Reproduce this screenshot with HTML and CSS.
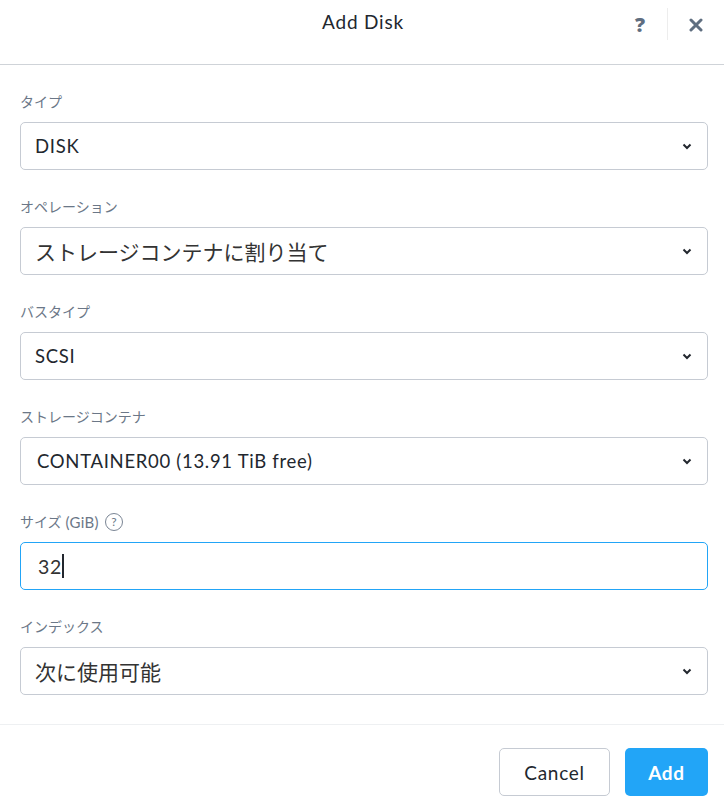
FILE: index.html
```html
<!DOCTYPE html>
<html lang="ja">
<head>
<meta charset="utf-8">
<title>Add Disk</title>
<link rel="stylesheet" href="styles.css">
</head>
<body>
<div class="modal">
  <header class="header">
    <div class="title">Add Disk</div>
    <div class="actions">
      <span class="help">?</span>
      <span class="sep"></span>
      <span class="close">
        <svg width="14" height="14" viewBox="0 0 14 14"><path d="M2 2 L12 12 M12 2 L2 12" stroke="#5f6e80" stroke-width="3" stroke-linecap="round"/></svg>
      </span>
    </div>
  </header>
  <main class="body">
    <div class="field">
      <div class="label">タイプ</div>
      <div class="select"><span class="value">DISK</span><svg class="chev" width="10" height="7" viewBox="0 0 10 7"><path d="M1.5 1.5 L5 5 L8.5 1.5" fill="none" stroke="#22272e" stroke-width="2"/></svg></div>
    </div>
    <div class="field">
      <div class="label">オペレーション</div>
      <div class="select"><span class="value jp">ストレージコンテナに割り当て</span><svg class="chev" width="10" height="7" viewBox="0 0 10 7"><path d="M1.5 1.5 L5 5 L8.5 1.5" fill="none" stroke="#22272e" stroke-width="2"/></svg></div>
    </div>
    <div class="field">
      <div class="label">バスタイプ</div>
      <div class="select"><span class="value">SCSI</span><svg class="chev" width="10" height="7" viewBox="0 0 10 7"><path d="M1.5 1.5 L5 5 L8.5 1.5" fill="none" stroke="#22272e" stroke-width="2"/></svg></div>
    </div>
    <div class="field">
      <div class="label">ストレージコンテナ</div>
      <div class="select"><span class="value wide">CONTAINER00 (13.91 TiB free)</span><svg class="chev" width="10" height="7" viewBox="0 0 10 7"><path d="M1.5 1.5 L5 5 L8.5 1.5" fill="none" stroke="#22272e" stroke-width="2"/></svg></div>
    </div>
    <div class="field">
      <div class="label"><span>サイズ</span><span class="latin">(GiB)</span><span class="qcircle">?</span></div>
      <div class="select input"><span class="value num">32</span><span class="caret"></span></div>
    </div>
    <div class="field">
      <div class="label">インデックス</div>
      <div class="select"><span class="value jp">次に使用可能</span><svg class="chev" width="10" height="7" viewBox="0 0 10 7"><path d="M1.5 1.5 L5 5 L8.5 1.5" fill="none" stroke="#22272e" stroke-width="2"/></svg></div>
    </div>
  </main>
  <footer class="footer">
    <button class="btn cancel">Cancel</button>
    <button class="btn add">Add</button>
  </footer>
</div>
</body>
</html>
```

FILE: styles.css
```css
html, body {
  margin: 0;
  padding: 0;
  background: #ffffff;
}
body {
  font-family: "Lato", "Noto Sans CJK JP", sans-serif;
  color: #22272e;
}
.modal {
  width: 724px;
  height: 808px;
  display: flex;
  flex-direction: column;
}
.header {
  height: 64px;
  border-bottom: 1px solid #cfd3d8;
  display: flex;
  align-items: center;
  justify-content: center;
  position: relative;
  box-sizing: content-box;
  flex: 0 0 auto;
}
.title {
  font-size: 19px;
  letter-spacing: 0.8px;
  margin-top: -21px;
  margin-left: 2px;
  color: #22272e;
}
.actions {
  position: absolute;
  right: 0;
  top: 8px;
  height: 32px;
  display: flex;
  align-items: center;
}
.help {
  font-family: "Open Sans", sans-serif;
  font-size: 20px;
  font-weight: 800;
  color: #5f6e80;
  width: 20px;
  text-align: center;
  margin-right: 17px;
}
.sep {
  width: 1px;
  height: 32px;
  background: #ededed;
}
.close {
  width: 56px;
  display: flex;
  justify-content: center;
  align-items: center;
  padding-top: 2px;
}
.body {
  padding: 27px 16px 0 20px;
  height: 660px;
  box-sizing: border-box;
  border-bottom: 1px solid #eef0f2;
  flex: 0 0 auto;
}
.field {
  margin-bottom: 27px;
}
.label {
  height: 20px;
  line-height: 20px;
  font-size: 14px;
  color: #6b7787;
  margin-bottom: 10px;
  display: flex;
  align-items: center;
}
.latin {
  font-size: 15px;
  letter-spacing: 0.3px;
  margin-left: 4px;
}
.qcircle {
  display: inline-flex;
  border: 1px solid #7a8594;
  border-radius: 50%;
  font-size: 12px;
  line-height: 16px;
  align-items: center;
  justify-content: center;
  box-sizing: border-box;
  width: 18px;
  height: 18px;
  margin-left: 6px;
}
.select {
  height: 48px;
  box-sizing: border-box;
  border: 1px solid #c6cbd3;
  border-radius: 5px;
  display: flex;
  align-items: center;
  padding: 0 14px 0 14px;
}
.value {
  flex: 1;
  font-size: 18.5px;
  letter-spacing: 0.7px;
  color: #22272e;
}
.value.jp {
  font-size: 21px;
  letter-spacing: 0;
  color: #333333;
}
.value.wide {
  padding-left: 2px;
}
.chev {
  display: block;
  margin-right: 1px;
}
.input {
  border-color: #22a5f7;
  padding-left: 17px;
}
.input .value {
  flex: 0 0 auto;
  font-size: 19.5px;
  color: #333;
}
.caret {
  width: 2px;
  height: 24px;
  background: #22272e;
  flex: 0 0 auto;
}
.input::after {
  content: "";
  flex: 1;
}
.footer {
  flex: 1;
  display: flex;
  justify-content: flex-end;
  align-items: flex-start;
  padding: 23px 16px 0 0;
  gap: 15px;
}
.btn {
  height: 48px;
  border-radius: 5px;
  font-family: "Lato", sans-serif;
  font-size: 19px;
  letter-spacing: 0.7px;
  cursor: pointer;
}
.cancel {
  width: 111px;
  background: #ffffff;
  border: 1px solid #c6cbd3;
  color: #22272e;
}
.add {
  width: 83px;
  background: #22a5f7;
  border: none;
  color: #ffffff;
  font-weight: 700;
}
```
